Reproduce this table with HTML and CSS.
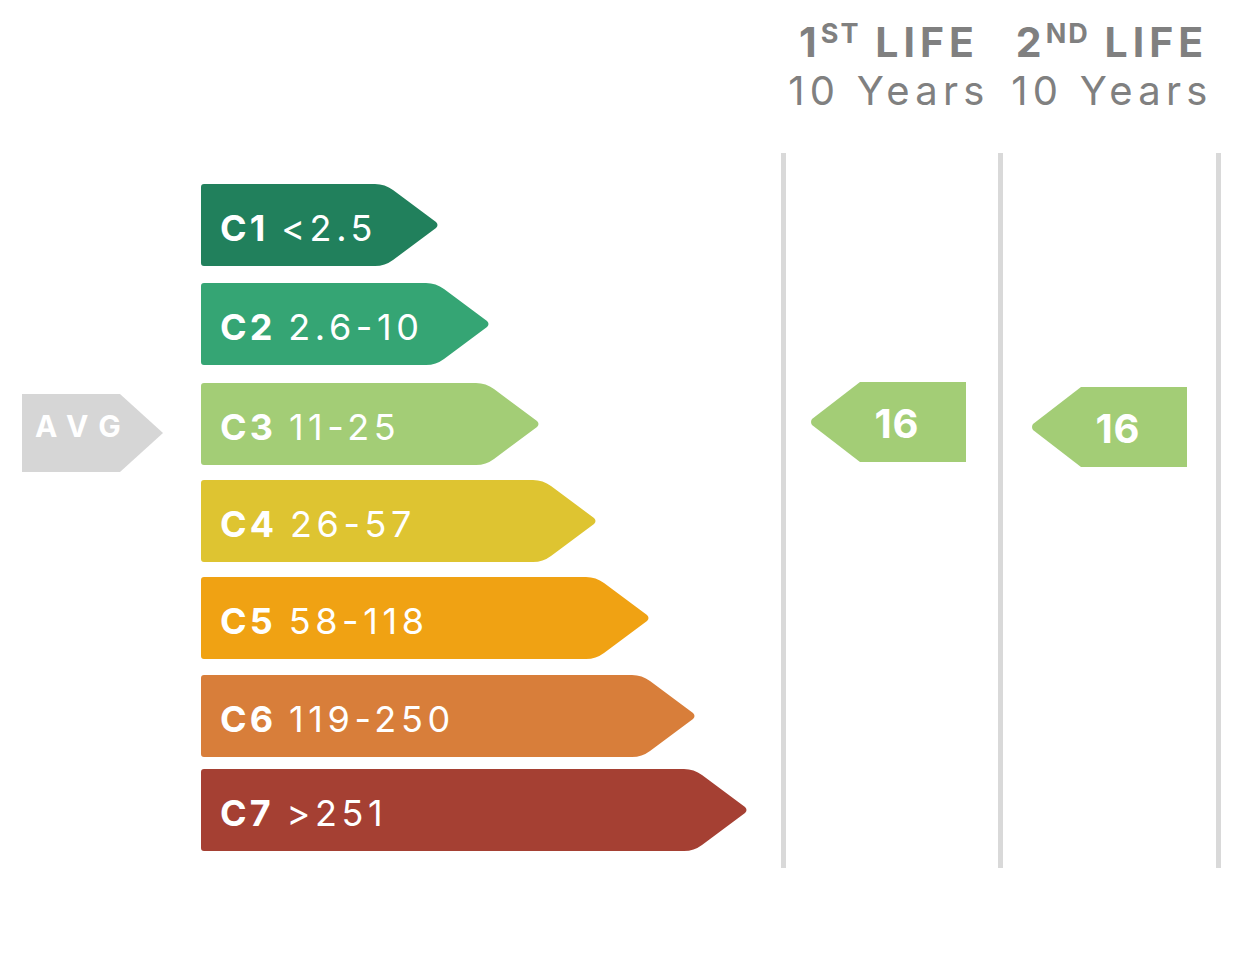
FILE: index.html
```html
<!DOCTYPE html>
<html lang="en">
<head>
<meta charset="utf-8">
<title>Energy scale</title>
<link rel="stylesheet" href="styles.css">
</head>
<body>
<main class="chart">
  <div class="corner"></div>
  <header class="life-head first">
    <div class="life-title">1<sup>ST</sup> LIFE</div>
    <div class="life-years">10 Years</div>
  </header>
  <header class="life-head second">
    <div class="life-title">2<sup>ND</sup> LIFE</div>
    <div class="life-years">10 Years</div>
  </header>

  <section class="scale">
    <div class="avg">AVG</div>
    <div class="bar c1"><b>C1</b><span>&lt;2.5</span></div>
    <div class="bar c2"><b>C2</b><span>2.6-10</span></div>
    <div class="bar c3"><b>C3</b><span>11-25</span></div>
    <div class="bar c4"><b>C4</b><span>26-57</span></div>
    <div class="bar c5"><b>C5</b><span>58-118</span></div>
    <div class="bar c6"><b>C6</b><span>119-250</span></div>
    <div class="bar c7"><b>C7</b><span>&gt;251</span></div>
  </section>

  <section class="life-col first">
    <div class="marker">16</div>
  </section>
  <section class="life-col second">
    <div class="marker">16</div>
  </section>
</main>
</body>
</html>
```

FILE: styles.css
```css
html, body {
  margin: 0;
  padding: 0;
  background: #ffffff;
}

body {
  font-family: Inter, "Liberation Sans", sans-serif;
}

.chart {
  display: grid;
  grid-template-columns: 781px 217px 223px;
  grid-template-rows: 153px 715px;
  width: 1221px;
}

.life-head {
  display: flex;
  flex-direction: column;
  align-items: center;
  padding-top: 18px;
  color: #808080;
  box-sizing: border-box;
}

.life-head.first {
  padding-right: 6px;
}

.life-title {
  font-size: 41px;
  line-height: 48px;
  font-weight: 700;
  letter-spacing: 5px;
  white-space: nowrap;
  margin-right: -5px;
}

.life-title sup {
  font-size: 27px;
  line-height: 0;
  vertical-align: 14px;
  letter-spacing: 2px;
  margin-left: -1px;
}

.life-years {
  font-size: 40px;
  line-height: 50px;
  font-weight: 400;
  letter-spacing: 5.3px;
  white-space: nowrap;
  margin-right: -5px;
}

.scale {
  display: grid;
  grid-template-columns: 179px auto;
  align-content: start;
  justify-items: start;
  padding: 31px 0 0 22px;
}

.avg {
  grid-column: 1;
  grid-row: 3;
  align-self: start;
  margin: 29px 0 -7px 0;
  width: 141px;
  height: 78px;
  box-sizing: border-box;
  padding: 0 0 15px 13px;
  display: flex;
  align-items: center;
  background: #d6d6d6;
  color: #ffffff;
  font-size: 30px;
  font-weight: 700;
  letter-spacing: 11px;
  clip-path: polygon(0 0, 98px 0, 100% 50%, 98px 100%, 0 100%);
}

.bar {
  grid-column: 2;
  height: 82px;
  box-sizing: border-box;
  display: flex;
  align-items: center;
  padding: 6px 0 0 19px;
  color: #ffffff;
  font-size: 36px;
  letter-spacing: 4.6px;
  white-space: nowrap;
}

.bar b {
  font-weight: 700;
  margin-right: 13px;
  letter-spacing: 3px;
}

.bar span {
  font-weight: 400;
}

.c1 {
  grid-row: 1;
  width: 238px;
  background: #21805c;
  clip-path: path("M3,0 H174 Q184,0 192,6 L235,38 Q238,41 235,44 L192,76 Q184,82 174,82 H3 Q0,82 0,79 V3 Q0,0 3,0 Z");
}
.c2 {
  grid-row: 2;
  width: 289px;
  margin-top: 17px;
  background: #35a574;
  clip-path: path("M3,0 H225 Q235,0 243,6 L286,38 Q289,41 286,44 L243,76 Q235,82 225,82 H3 Q0,82 0,79 V3 Q0,0 3,0 Z");
}
.c3 {
  grid-row: 3;
  width: 339px;
  margin-top: 18px;
  background: #a3cd76;
  clip-path: path("M3,0 H275 Q285,0 293,6 L336,38 Q339,41 336,44 L293,76 Q285,82 275,82 H3 Q0,82 0,79 V3 Q0,0 3,0 Z");
}
.c4 {
  grid-row: 4;
  width: 396px;
  margin-top: 15px;
  background: #dec431;
  clip-path: path("M3,0 H332 Q342,0 350,6 L393,38 Q396,41 393,44 L350,76 Q342,82 332,82 H3 Q0,82 0,79 V3 Q0,0 3,0 Z");
}
.c5 {
  grid-row: 5;
  width: 449px;
  margin-top: 15px;
  background: #f0a213;
  clip-path: path("M3,0 H385 Q395,0 403,6 L446,38 Q449,41 446,44 L403,76 Q395,82 385,82 H3 Q0,82 0,79 V3 Q0,0 3,0 Z");
}
.c6 {
  grid-row: 6;
  width: 495px;
  margin-top: 16px;
  background: #d87e3a;
  clip-path: path("M3,0 H431 Q441,0 449,6 L492,38 Q495,41 492,44 L449,76 Q441,82 431,82 H3 Q0,82 0,79 V3 Q0,0 3,0 Z");
}
.c7 {
  grid-row: 7;
  width: 547px;
  margin-top: 12px;
  background: #a54033;
  clip-path: path("M3,0 H483 Q493,0 501,6 L544,38 Q547,41 544,44 L501,76 Q493,82 483,82 H3 Q0,82 0,79 V3 Q0,0 3,0 Z");
}

.life-col {
  border-left: 5px solid #d9d9d9;
}

.life-col.second {
  border-right: 5px solid #d9d9d9;
}

.marker {
  width: 156px;
  height: 80px;
  box-sizing: border-box;
  display: flex;
  align-items: center;
  justify-content: center;
  padding: 2px 0 0 18px;
  background: #a3cd76;
  color: #ffffff;
  font-size: 40px;
  font-weight: 700;
  letter-spacing: 1px;
  clip-path: path("M50,0 H156 V80 H50 L2,43 Q0,40 2,37 Z");
}

.life-col.first .marker {
  margin: 229px 0 0 24px;
}

.life-col.second .marker {
  margin: 234px 0 0 28px;
}
```
